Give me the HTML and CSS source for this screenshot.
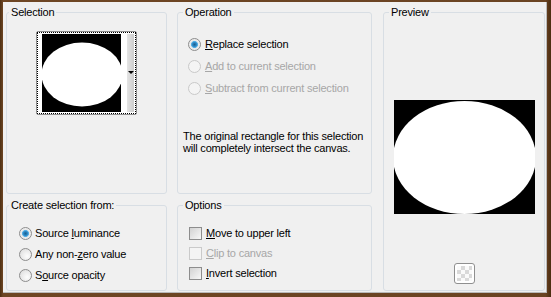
FILE: index.html
```html
<!DOCTYPE html>
<html lang="en">
<head>
  <meta charset="UTF-8">
  <title>Selection from mask</title>
  <link rel="stylesheet" href="styles.css">
</head>
<body>
<div class="dialog">
  <fieldset class="group group-left">
    <legend>Selection</legend>
    <div class="thumb">
      <div class="thumb-focus">
        <svg class="thumb-img" width="79" height="78" viewBox="0 0 79 78">
          <rect width="79" height="78" fill="#000"/>
          <ellipse cx="40" cy="40.5" rx="40.5" ry="32" fill="#fff"/>
        </svg>
        <div class="thumb-gap"></div>
        <div class="thumb-drop"><span class="arrow"></span></div>
      </div>
    </div>
  </fieldset>

  <fieldset class="group">
    <legend>Operation</legend>
    <div class="opt-list op-list">
      <div class="opt"><span class="radio checked"></span><span><u>R</u>eplace selection</span></div>
      <div class="opt disabled"><span class="radio"></span><span><u>A</u>dd to current selection</span></div>
      <div class="opt disabled"><span class="radio"></span><span><u>S</u>ubtract from current selection</span></div>
    </div>
    <p class="note">The original rectangle for this selection<br>will completely intersect the canvas.</p>
  </fieldset>

  <fieldset class="group preview">
    <legend>Preview</legend>
    <svg class="preview-img" width="141" height="114" viewBox="0 0 141 114">
      <rect width="141" height="114" fill="#000"/>
      <ellipse cx="70.5" cy="57.5" rx="71.5" ry="56.5" fill="#fff"/>
    </svg>
    <div class="bg-button"><span class="checker"></span></div>
  </fieldset>

  <fieldset class="group group-left">
    <legend>Create selection from:</legend>
    <div class="opt-list src-list">
      <div class="opt"><span class="radio checked"></span><span>Source <u>l</u>uminance</span></div>
      <div class="opt"><span class="radio"></span><span>Any non-<u>z</u>ero value</span></div>
      <div class="opt"><span class="radio"></span><span>S<u>o</u>urce opacity</span></div>
    </div>
  </fieldset>

  <fieldset class="group">
    <legend>Options</legend>
    <div class="opt-list chk-list">
      <div class="opt"><span class="check"></span><span><u>M</u>ove to upper left</span></div>
      <div class="opt disabled"><span class="check"></span><span><u>C</u>lip to canvas</span></div>
      <div class="opt"><span class="check"></span><span><u>I</u>nvert selection</span></div>
    </div>
  </fieldset>
</div>
</body>
</html>
```

FILE: styles.css
```css
html, body {
  margin: 0;
  height: 297px;
  overflow: hidden;
}
body {
  background: linear-gradient(90deg, #4e2f12, #6e4624 3px, #6a4322 99%, #4a2c10);
  font-family: "Liberation Sans", Arial, sans-serif;
  font-size: 11px;
  letter-spacing: -0.2px;
  color: #000;
}
.dialog {
  box-sizing: border-box;
  margin: 2px 4px 0 3px;
  height: 291px;
  padding: 4px 0 0 3px;
  background: #f0f0f0;
  border-right: 1px solid #b9b9b9;
  border-bottom: 1px solid #b9b9b9;
  display: grid;
  grid-template-columns: 161px 195px 163px;
  grid-template-rows: 188px 92px;
  column-gap: 10px;
  row-gap: 5px;
}
.group {
  margin: 0;
  padding: 0;
  min-width: 0;
  border: 1px solid #d8dee4;
  border-radius: 3px;
}
.group legend {
  padding: 0 2px;
  margin-left: 5px;
  line-height: 13px;
}
.group-left legend {
  margin-left: 2px;
}
.preview {
  grid-column: 3;
  grid-row: 1 / 3;
  margin-left: 1px;
  display: flex;
  flex-direction: column;
  align-items: center;
}

/* selection dropdown */
.thumb {
  width: 99px;
  margin: 12px auto 0;
  border: 1px solid #8f8f8f;
  border-radius: 2px;
  background: #fff;
}
.thumb-focus {
  display: flex;
  border: 1px dotted #000;
  padding: 1px 0 1px 4px;
}
.thumb-img {
  display: block;
}
.thumb-gap {
  width: 6px;
}
.thumb-drop {
  width: 7px;
  background: linear-gradient(90deg, #e4e4e4, #cdcdcd);
  position: relative;
}
.arrow {
  position: absolute;
  left: 1px;
  top: 37px;
  border-left: 3px solid transparent;
  border-right: 3px solid transparent;
  border-top: 3px solid #000;
}

/* option rows */
.opt-list {
  display: flex;
  flex-direction: column;
}
.opt {
  display: flex;
  align-items: center;
  height: 14px;
  gap: 4px;
  white-space: nowrap;
}
.opt.disabled {
  color: #a7a7a7;
}
.op-list {
  margin-top: 18px;
  padding-left: 10px;
  gap: 8px;
}
.src-list {
  margin-top: 14px;
  padding-left: 12px;
  gap: 7px;
}
.src-list .opt {
  gap: 3px;
}
.chk-list {
  margin-top: 14px;
  padding-left: 11px;
  gap: 6px;
}
.radio {
  box-sizing: border-box;
  width: 13px;
  height: 13px;
  border-radius: 50%;
  border: 1px solid #8d8d8d;
  background: radial-gradient(circle at 65% 65%, #fdfdfd, #d9d9d9);
  flex: none;
}
.radio.checked {
  background: radial-gradient(circle at 50% 50%, #1a5f8e 0, #2d86c2 2px, #58b3e8 3.2px, #e8e8e8 3.8px, #f6f6f6);
}
.disabled .radio {
  border-color: #c9c9c9;
  background: #f4f4f4;
}
.check {
  box-sizing: border-box;
  width: 13px;
  height: 13px;
  border: 1px solid #8d8d8d;
  background: linear-gradient(135deg, #d2d2d2, #f8f8f8);
  flex: none;
}
.disabled .check {
  border-color: #cacaca;
  background: #f4f4f4;
}
.note {
  margin: 35px 0 0;
  padding-left: 5px;
  line-height: 12px;
  white-space: nowrap;
}

/* preview */
.preview-img {
  display: block;
  margin-top: 81px;
}
.bg-button {
  box-sizing: border-box;
  width: 21px;
  height: 21px;
  margin-top: 49px;
  border: 1px solid #8f8f8f;
  border-radius: 3px;
  background: #fff;
  padding: 2px;
}
.checker {
  display: block;
  width: 100%;
  height: 100%;
  background: repeating-conic-gradient(#d9d9d9 0 25%, #fafafa 0 50%) 0 0 / 8px 8px;
}
```
